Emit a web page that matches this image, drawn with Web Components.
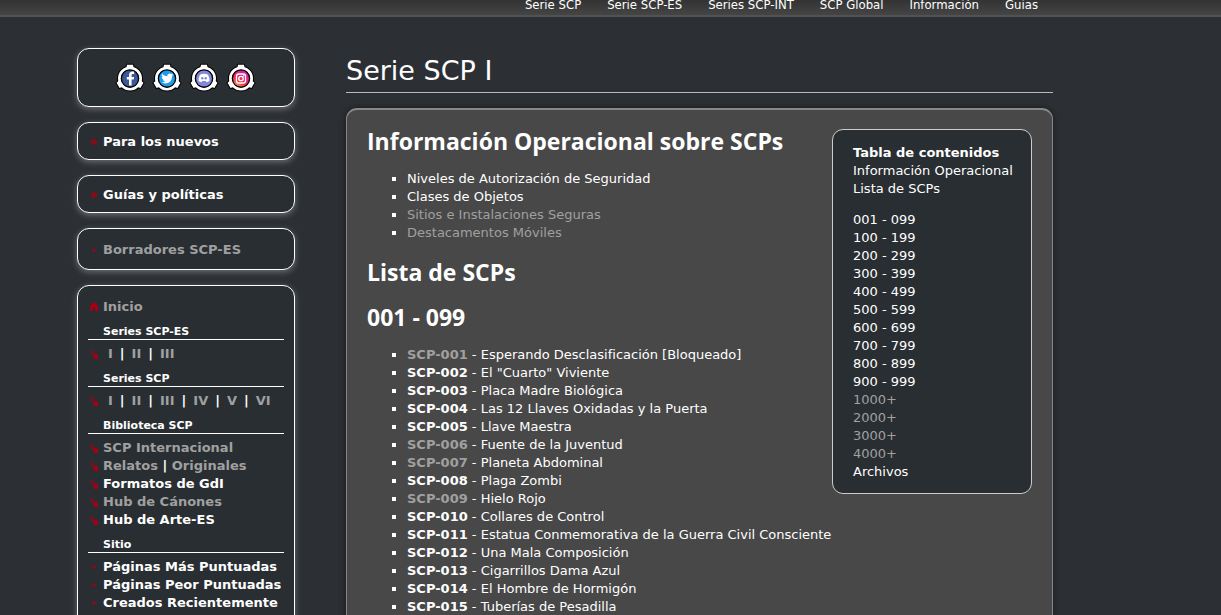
<!DOCTYPE html>
<html lang="es">
<head>
<meta charset="utf-8">
<meta name="viewport" content="width=device-width, initial-scale=1">
<title>Serie SCP I</title>
<style>
html{scrollbar-width:none;background:#2c3034}
body{margin:0;min-height:100vh;font:13px/18px Verdana,"DejaVu Sans",sans-serif;color:#fff;--muted:#a0a0a0;--red:#a50016}
</style>
</head>
<body>
<scp-topbar></scp-topbar>
<scp-layout>
  <scp-box slot="side" size="social"><scp-social></scp-social></scp-box>
  <scp-box slot="side"><scp-link icon="plus">Para los nuevos</scp-link></scp-box>
  <scp-box slot="side"><scp-link icon="plus">Guías y políticas</scp-link></scp-box>
  <scp-box slot="side" size="tall"><scp-link icon="dot" visited>Borradores SCP-ES</scp-link></scp-box>
  <scp-box slot="side" size="menu">
    <scp-link icon="home" visited>Inicio</scp-link>
    <scp-heading>Series SCP-ES</scp-heading>
    <scp-series items="I,II,III"></scp-series>
    <scp-heading>Series SCP</scp-heading>
    <scp-series items="I,II,III,IV,V,VI"></scp-series>
    <scp-heading>Biblioteca SCP</scp-heading>
    <scp-link icon="pages" visited>SCP Internacional</scp-link>
    <scp-link icon="pages" visited also="Originales">Relatos</scp-link>
    <scp-link icon="pages">Formatos de GdI</scp-link>
    <scp-link icon="pages" visited>Hub de Cánones</scp-link>
    <scp-link icon="pages">Hub de Arte-ES</scp-link>
    <scp-heading>Sitio</scp-heading>
    <scp-link icon="dot">Páginas Más Puntuadas</scp-link>
    <scp-link icon="dot">Páginas Peor Puntuadas</scp-link>
    <scp-link icon="dot">Creados Recientemente</scp-link>
  </scp-box>
  <scp-article></scp-article>
</scp-layout>

<script>
function define(name, render) {
  customElements.define(name, class extends HTMLElement {
    connectedCallback() {
      if (this.shadowRoot) return;
      this.attachShadow({ mode: 'open' }).innerHTML = render(this);
    }
  });
}

const linkCss = 'a{color:#fff;text-decoration:none}a:hover{text-decoration:underline}a.visited{color:var(--muted)}';

const marks = {
  plus: '<path d="M5 1l4 4-4 4-4-4z" opacity=".5"/><path d="M4 4V2h2v2h2v2H6v2H4V6H2V4z" opacity=".6"/>',
  dot: '<path d="M5 3l2 2-2 2-2-2z"/>',
  home: '<path d="M5 0l5 5H9v4H6V6H4v3H1V5H0z"/>',
  pages: '<path d="M1 1h4v1H2v4H1z" opacity=".7"/><path d="M3 3h3v1H4v4H3z" opacity=".8"/><path d="M5 5h3v1h1v4H5z"/>'
};
const mark = n => `<svg width="10" height="10" viewBox="0 0 10 10" aria-hidden="true" shape-rendering="${n === 'pages' ? 'crispEdges' : 'auto'}">${marks[n]}</svg>`;
const rowCss = ':host{display:flex;align-items:center;gap:4px;height:18px;padding-left:1px;font-weight:700;white-space:nowrap}svg{fill:var(--red);flex:none}';

define('scp-topbar', () => `<style>
  :host{display:block}
  nav{display:flex;align-items:flex-end;justify-content:flex-end;gap:26px;height:17px;box-sizing:border-box;padding:0 183px 5px 0;border-bottom:2px solid #525252;background:linear-gradient(#333,#454545);font:13px/10px Tahoma,"DejaVu Sans Condensed","Noto Sans",sans-serif;white-space:nowrap}
  ${linkCss}</style>
  <nav>${['Serie SCP','Serie SCP-ES','Series SCP-INT','SCP Global','Información','Guias'].map(t => `<a href="#">${t}</a>`).join('')}</nav>`);

define('scp-layout', () => `<style>
  :host{display:grid;grid-template-columns:218px minmax(0,1fr);column-gap:51px;padding:31px 168px 0 77px}
  aside{display:flex;flex-direction:column;gap:15px}
  main{min-width:0}</style>
  <aside><slot name="side"></slot></aside><main><slot></slot></main>`);

define('scp-box', () => `<style>
  :host{display:flex;flex-direction:column;justify-content:center;box-sizing:border-box;min-height:38px;padding:2px 10px 0;border:1px solid #fff;border-radius:12px;background:#292e32;box-shadow:0 2px 6px rgba(255,255,255,.3)}
  :host([size=social]){min-height:59px;padding:0 12px 0 10px;align-items:center}
  :host([size=tall]){min-height:42px}
  :host([size=menu]){padding:12px 10px 24px}</style><slot></slot>`);

define('scp-link', el => `<style>${rowCss}${linkCss}</style>
  ${mark(el.getAttribute('icon'))}<span><a href="#" class="${el.hasAttribute('visited') ? 'visited' : ''}"><slot></slot></a>${
  el.hasAttribute('also') ? ` | <a href="#" class="visited">${el.getAttribute('also')}</a>` : ''}</span>`);

define('scp-heading', () => `<style>
  :host{display:block;padding:8px 0 0 15px;margin-bottom:5px;border-bottom:1px solid #fff;font-size:11px;line-height:15px;font-weight:700}</style><slot></slot>`);

define('scp-series', el => `<style>${rowCss}div{display:flex;gap:7px;padding-left:5px}${linkCss}</style>
  ${mark('pages')}<div>${el.getAttribute('items').split(',').map(t => `<a href="#" class="visited">${t}</a>`).join('<span>|</span>')}</div>`);

const logos = {
  Facebook: ['#3b5998', '<path fill="#fff" d="M13 21.500v-6h-2.200v-2.500h2.200v-1.800c0-2.400 1.400-3.700 3.500-3.700h1.600v2.500h-1.200c-1 0-1.300.4-1.300 1.200v1.800h2.500l-.4 2.500h-2.100v6z"/>'],
  Twitter: ['#1d9bec', '<path fill="#fff" d="M20.500 10.500l-1.500.4 1.100-1.400-1.700.6c-1.600-1.500-4.200-.3-4.100 2.100-2.100 0-4-1-5.200-2.700-.8 1.300-.4 2.900.8 3.700l-1.100-.3c0 1.300.9 2.300 2.100 2.600h-1.100c.4 1.100 1.300 1.600 2.500 1.800-1.100.8-2.500 1.200-3.900 1 5.200 3 11-.4 10.700-6.400z"/>'],
  Discord: ['#8289dc', '<path fill="#fff" d="M10.300 10.500c2.400-1 5-1 7.400 0 1.300 2 1.800 4.200 1.700 6.500-.9.700-1.900 1-2.900 1.200l-.7-1.100h-3.600l-.7 1.100c-1-.2-2-.5-2.900-1.200-.1-2.300.4-4.500 1.700-6.500z"/><circle cx="12.300" cy="14.300" r="1.200" fill="#8289dc"/><circle cx="15.700" cy="14.300" r="1.200" fill="#8289dc"/>'],
  Instagram: ['url(#ig)', '<rect x="9.500" y="10" width="9" height="9" rx="2.300" fill="none" stroke="#fff" stroke-width="1.300"/><circle cx="14" cy="14.500" r="2.200" fill="none" stroke="#fff" stroke-width="1.300"/><circle cx="16.600" cy="11.900" r=".7" fill="#fff"/>']
};
const lugs = [0, 120, 240].map(r => `<path d="M-3-13.800h6l1 5h-8z" transform="translate(14 14.500) rotate(${r})"/>`).join('');
define('scp-social', () => `<style>
  :host{display:flex;gap:9px}a{display:block;height:28px}svg{display:block;overflow:visible}</style>
  ${Object.entries(logos).map(([n, [bg, art]]) => `<a href="#" aria-label="${n}"><svg width="28" height="28" viewBox="0 0 28 28">
    <defs><linearGradient id="ig" x1="0" y1="1" x2=".6" y2="0"><stop offset="0" stop-color="#ffd34f"/><stop offset=".4" stop-color="#f0304c"/><stop offset="1" stop-color="#d41ea8"/></linearGradient></defs>
    <g stroke="#000" stroke-width="2" stroke-linejoin="round"><circle cx="14" cy="14.500" r="12"/>${lugs}</g>
    <circle cx="14" cy="14.500" r="10.600" fill="#000" stroke="#fff" stroke-width="2.800"/>
    <g fill="#fff">${lugs}</g>
    <circle cx="14" cy="14.500" r="9.200"/>
    <circle cx="14" cy="14.500" r="8" fill="${bg}"/>${art}</svg></a>`).join('')}`);

define('scp-toc', () => `<style>
  :host{display:block;box-sizing:border-box;width:200px;padding:14px 0 12px 20px;border:1px solid #ccc;border-radius:11px;background:#292e32;white-space:nowrap}
  ul{list-style:none;margin:0;padding:0}ul+ul{margin-top:13px}strong{display:block}${linkCss}</style>
  <nav aria-label="Tabla de contenidos"><strong>Tabla de contenidos</strong>
  <ul><li><a href="#">Información Operacional</a></li><li><a href="#">Lista de SCPs</a></li></ul>
  <ul>${['001 - 099','100 - 199','200 - 299','300 - 399','400 - 499','500 - 599','600 - 699','700 - 799','800 - 899','900 - 999','1000+','2000+','3000+','4000+','Archivos'].map(t => `<li><a href="#" class="${t.endsWith('+') ? 'visited' : ''}">${t}</a></li>`).join('')}</ul></nav>`);

const entries = ['Esperando Desclasificación [Bloqueado]','El "Cuarto" Viviente','Placa Madre Biológica','Las 12 Llaves Oxidadas y la Puerta','Llave Maestra','Fuente de la Juventud','Planeta Abdominal','Plaga Zombi','Hielo Rojo','Collares de Control','Estatua Conmemorativa de la Guerra Civil Consciente','Una Mala Composición','Cigarrillos Dama Azul','El Hombre de Hormigón','Tuberías de Pesadilla'];
const read = [1, 6, 7, 9];
define('scp-article', () => `<style>
  :host{display:block}
  h1{margin:0 0 15px;padding:4px 0 3px;border-bottom:1px solid #bbb;font-size:27px;line-height:37px;font-weight:400}
  section{padding:16px 20px 24px;border:1px solid #888;border-top-width:2px;border-radius:11px 11px 0 0;background:#484848;box-shadow:0 0 6px rgba(0,0,0,.5)}
  scp-toc{float:right;margin:3px 0 16px 4px}
  h2{margin:15px 0 14px;font:700 23px/30px "Trebuchet MS","Open Sans",sans-serif}
  h2:first-of-type{margin-top:0}
  ul{margin:0;padding-left:40px;list-style:square}
  ${linkCss}</style>
  <h1>Serie SCP I</h1>
  <section>
    <scp-toc></scp-toc>
    <h2>Información Operacional sobre SCPs</h2>
    <ul><li><a href="#">Niveles de Autorización de Seguridad</a></li><li><a href="#">Clases de Objetos</a></li><li><a href="#" class="visited">Sitios e Instalaciones Seguras</a></li><li><a href="#" class="visited">Destacamentos Móviles</a></li></ul>
    <h2>Lista de SCPs</h2>
    <h2>001 - 099</h2>
    <ul>${entries.map((t, i) => `<li><b><a href="#" class="${read.includes(i + 1) ? 'visited' : ''}">SCP-${String(i + 1).padStart(3, '0')}</a></b> - ${t}</li>`).join('')}</ul>
  </section>`);
</script>
</body>
</html>
